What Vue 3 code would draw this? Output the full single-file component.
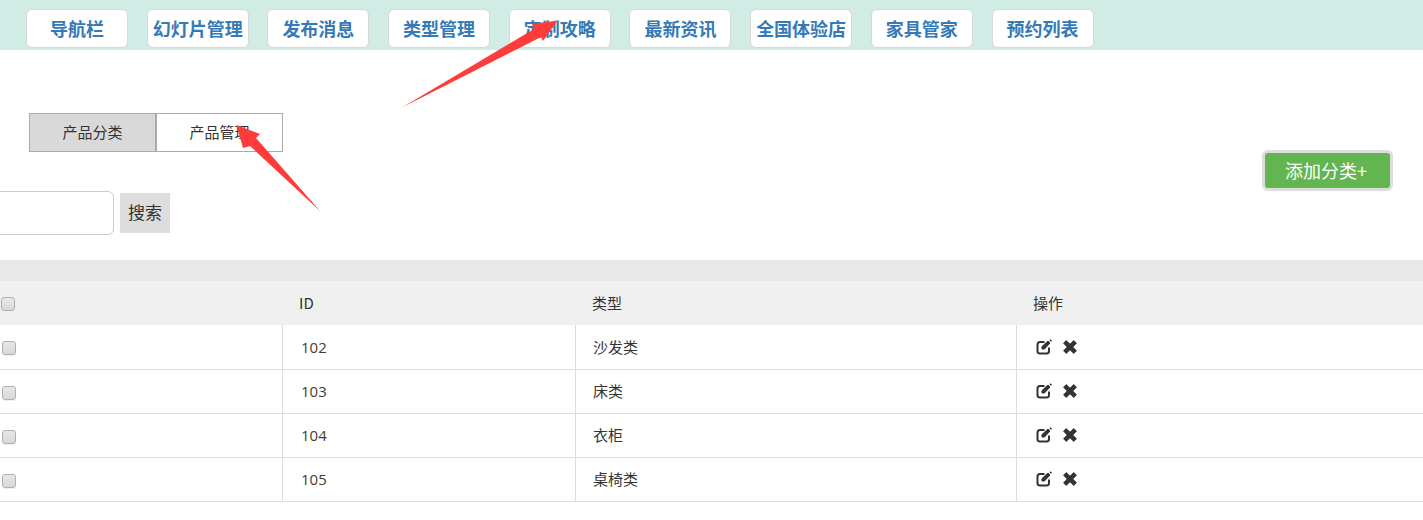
<script setup>
const navItems = ['导航栏','幻灯片管理','发布消息','类型管理','定制攻略','最新资讯','全国体验店','家具管家','预约列表']
const rows = [
  { id: 102, name: '沙发类' },
  { id: 103, name: '床类' },
  { id: 104, name: '衣柜' },
  { id: 105, name: '桌椅类' },
]
</script>

<template>
  <div class="page">
    <nav class="nav">
      <a v-for="n in navItems" :key="n" class="nav-btn">{{ n }}</a>
    </nav>
    <div class="tabs">
      <div class="tab active">产品分类</div>
      <div class="tab">产品管理</div>
    </div>
    <div class="tools">
      <div class="search">
        <div class="input"></div>
        <div class="search-btn">搜索</div>
      </div>
      <div class="add">添加分类+</div>
    </div>
    <div class="band"></div>
    <div class="row head">
      <div class="cell"><span class="check"></span></div>
      <div class="cell">ID</div>
      <div class="cell">类型</div>
      <div class="cell">操作</div>
    </div>
    <div v-for="r in rows" :key="r.id" class="row body">
      <div class="cell box"><span class="check"></span></div>
      <div class="cell num">{{ r.id }}</div>
      <div class="cell name">{{ r.name }}</div>
      <div class="cell icons">
        <svg width="16" height="16" viewBox="0 0 16 16" fill="none" stroke="#333" stroke-width="2">
          <path d="M8.500 3H4Q1.500 3 1.500 5.500V12Q1.500 14.500 4 14.500H10.500Q13 14.500 13 12V8.500"/>
          <path d="M6 10 6 7.500 12 2 14 4 8.500 10Z" fill="#333" stroke-width="1"/>
          <path d="M14 .8 15.400 2.200" stroke-width="1.600"/>
        </svg>
        <svg width="14" height="14" viewBox="0 0 14 14" fill="#333">
          <path d="M3.200.6 7 4.300 10.800.6 13.400 3.200 9.700 7 13.400 10.800 10.800 13.400 7 9.700 3.200 13.400.6 10.800 4.300 7 .6 3.200Z" stroke="#333" stroke-linejoin="round"/>
        </svg>
      </div>
    </div>
    <svg class="arrows" width="1423" height="520" viewBox="0 0 1423 520">
      <path d="M402 107.500 534 29 532 24 557.500 20.500 543 41 541 37Z" fill="#ff3b3b"/>
      <path d="M320.500 211.500 256 138 260 134 236.500 125 243 148 250 146Z" fill="#ff3b3b"/>
    </svg>
  </div>
</template>

<style>
html, body { margin: 0; background: #fff; overflow: hidden; }
</style>

<style scoped>
.page {
  position: relative;
  width: 1423px;
  height: 520px;
  overflow: hidden;
  font-family: "Noto Sans CJK SC", "Liberation Sans", sans-serif;
  color: #333;
  background: #fff;
}
.nav {
  height: 50px;
  box-sizing: border-box;
  background: #d0ece4;
  padding: 9px 0 0 26px;
  display: flex;
  gap: 18.700px;
}
.nav-btn {
  width: 102px;
  height: 39px;
  box-sizing: border-box;
  background: #fff;
  border: 1px solid #d8d8d8;
  border-radius: 6px;
  color: #337ab7;
  font-size: 18px;
  font-weight: 700;
  line-height: 37px;
  text-align: center;
  white-space: nowrap;
}
.tabs {
  display: flex;
  margin: 63px 0 0 29px;
}
.tab {
  width: 127px;
  height: 39px;
  box-sizing: border-box;
  border: 1px solid #aaa;
  font-size: 15px;
  line-height: 36px;
  text-align: center;
}
.tab.active { background: #d9d9d9; }
.tools {
  height: 108px;
  display: flex;
  justify-content: space-between;
  align-items: flex-start;
}
.search {
  display: flex;
  align-items: flex-start;
  margin-top: 39px;
  margin-left: -20px;
}
.input {
  width: 134px;
  height: 44px;
  box-sizing: border-box;
  border: 1px solid #ccc;
  border-radius: 6px;
  background: #fff;
}
.search-btn {
  width: 50px;
  height: 40px;
  margin: 2px 0 0 6px;
  background: #ddd;
  font-size: 17px;
  line-height: 38px;
  text-align: center;
}
.add {
  width: 131px;
  height: 41px;
  box-sizing: border-box;
  margin: -2px 30px 0 0;
  padding-right: 3px;
  background: #62b54f;
  border: 3px solid #ddd;
  border-radius: 6px;
  color: #fff;
  font-size: 18px;
  line-height: 35px;
  text-align: center;
}
.band {
  height: 21px;
  background: #e8e8e8;
}
.row {
  display: grid;
  grid-template-columns: 282px 293px 441px 1fr;
  font-size: 15px;
}
.head {
  height: 44px;
  background: #f0f0f0;
  line-height: 44px;
}
.head .cell { padding-left: 17px; }
.head .cell:first-child { padding-left: 1px; }
.body {
  height: 44px;
  box-sizing: border-box;
  border-bottom: 1px solid #ddd;
  line-height: 43px;
}
.head + .body { height: 45px; line-height: 45px; }
.body .cell {
  padding-left: 17px;
  border-left: 1px solid #ddd;
}
.body .box { padding-left: 2px; border-left: 0; }
.head + .body .box { line-height: 43px; }
.name { line-height: 41px; }
.head + .body .name { line-height: 43px; }
.body .num {
  color: #4a3a32;
  font-family: "Open Sans", "Noto Sans CJK SC", sans-serif;
  padding-left: 18px;
}
.check {
  display: inline-block;
  width: 14px;
  height: 14px;
  box-sizing: border-box;
  vertical-align: -2px;
  border: 1px solid #b0b0b0;
  border-radius: 3px;
  background: linear-gradient(#e8e8e8, #d8d8d8);
  box-shadow: 0 1px 0 #eee;
}
.body .icons {
  display: flex;
  align-items: center;
  gap: 11px;
  padding: 0 0 2px 19px;
}
.arrows {
  position: absolute;
  left: 0;
  top: 0;
  pointer-events: none;
}
</style>
